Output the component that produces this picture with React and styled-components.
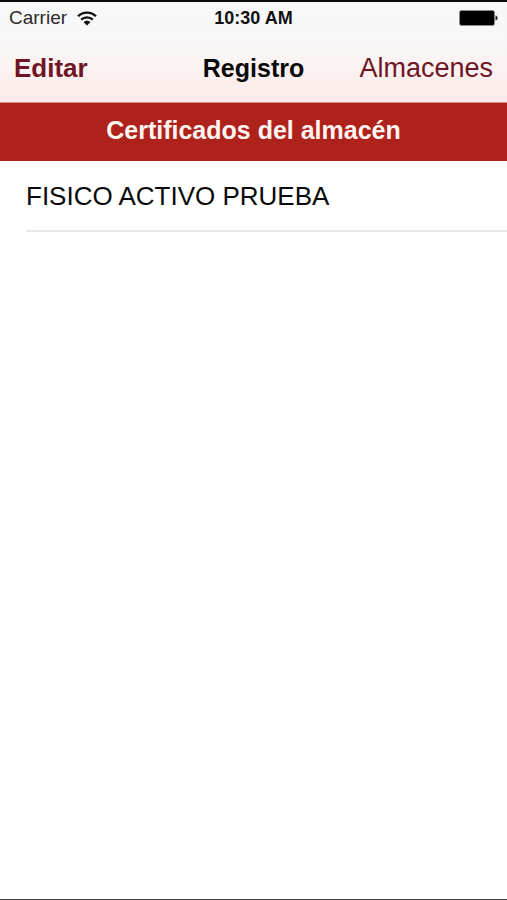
import React from 'react';
import styled, { createGlobalStyle } from 'styled-components';

const GlobalStyle = createGlobalStyle`
  * {
    box-sizing: border-box;
  }
  body {
    margin: 0;
    background-color: #ffffff;
    font-family: "Liberation Sans", Arial, sans-serif;
  }
`;
const Screen = styled.div`
  display: flex;
  flex-direction: column;
  min-height: 100vh;
  border-top: 2px solid #0c0a0b;
  border-bottom: 1px solid #444444;
`;
const Header = styled.header`
  background: linear-gradient(#f8f8f8 0%, #f9f7f7 40%, #fdebe9 100%);
  border-bottom: 1px solid #d9928e;
`;
const Bar = styled.div`
  display: grid;
  grid-template-columns: 1fr auto 1fr;
  align-items: center;
`;
const StatusBar = styled(Bar)`
  height: 32px;
  padding: 0 9px;
  color: #111111;
`;
const NavBar = styled(Bar)`
  height: 68px;
  padding: 0 14px;
`;
const Carrier = styled.div`
  display: flex;
  align-items: center;
  gap: 10px;
  font-size: 19px;
  color: #2b2b2b;
`;
const Clock = styled.time`
  font-size: 18px;
  font-weight: bold;
`;
const Battery = styled.svg`
  justify-self: end;
`;
const Title = styled.h1`
  margin: 0;
  font-size: 25px;
  line-height: 32px;
  color: #0a0a0a;
`;
const NavButton = styled.button`
  justify-self: ${props => props.$end ? 'end' : 'start'};
  padding: 0;
  border: 0;
  background: none;
  color: #701525;
  font-family: inherit;
  font-size: ${props => props.$strong ? '26px' : '27px'};
  font-weight: ${props => props.$strong ? 'bold' : 'normal'};
  line-height: 32px;
  cursor: pointer;
`;
const SectionTitle = styled.h2`
  margin: 0;
  padding: 11px 14px 15px;
  background-color: #ae221b;
  color: #fff4f0;
  font-size: 25px;
  line-height: 32px;
  text-align: center;
`;
const List = styled.ul`
  margin: 0;
  padding: 0 0 0 26px;
  list-style: none;
`;
const Item = styled.li`
  padding: 19px 0 18px;
  border-bottom: 2px solid #e8e8e8;
  color: #0a0a0a;
  font-size: 26px;
  line-height: 32px;
`;

const WifiIcon = () => (
  <svg width="20" height="15" viewBox="0 0 20 15" fill="none" stroke="#111111" strokeWidth="2.3" aria-hidden="true">
    <path d="M1 5.2C6 0.3 14 0.3 19 5.2" />
    <path d="M4.2 8.7C7.6 5.5 12.4 5.5 15.8 8.7" />
    <path d="M10 14.6L6.7 11.2C8.5 9.4 11.5 9.4 13.3 11.2Z" fill="#111111" stroke="none" />
  </svg>
);

const BatteryIcon = () => (
  <Battery width="39" height="16" viewBox="0 0 39 16" aria-hidden="true">
    <rect x="0.5" y="0.5" width="35" height="15" rx="2" fill="#000000" stroke="#8a8a8a" />
    <path d="M36.5 5.5C39.3 6 39.3 10 36.5 10.5Z" fill="#222222" />
  </Battery>
);

const certificados = ['FISICO ACTIVO PRUEBA'];

const App = () => (
  <Screen>
    <GlobalStyle />
    <Header>
      <StatusBar>
        <Carrier>
          <span>Carrier</span>
          <WifiIcon />
        </Carrier>
        <Clock>10:30 AM</Clock>
        <BatteryIcon />
      </StatusBar>
      <NavBar>
        <NavButton type="button" $strong>Editar</NavButton>
        <Title>Registro</Title>
        <NavButton type="button" $end>Almacenes</NavButton>
      </NavBar>
    </Header>
    <main>
      <SectionTitle>Certificados del almacén</SectionTitle>
      <List>
        {certificados.map(nombre => (
          <Item key={nombre}>{nombre}</Item>
        ))}
      </List>
    </main>
  </Screen>
);
export default App;
